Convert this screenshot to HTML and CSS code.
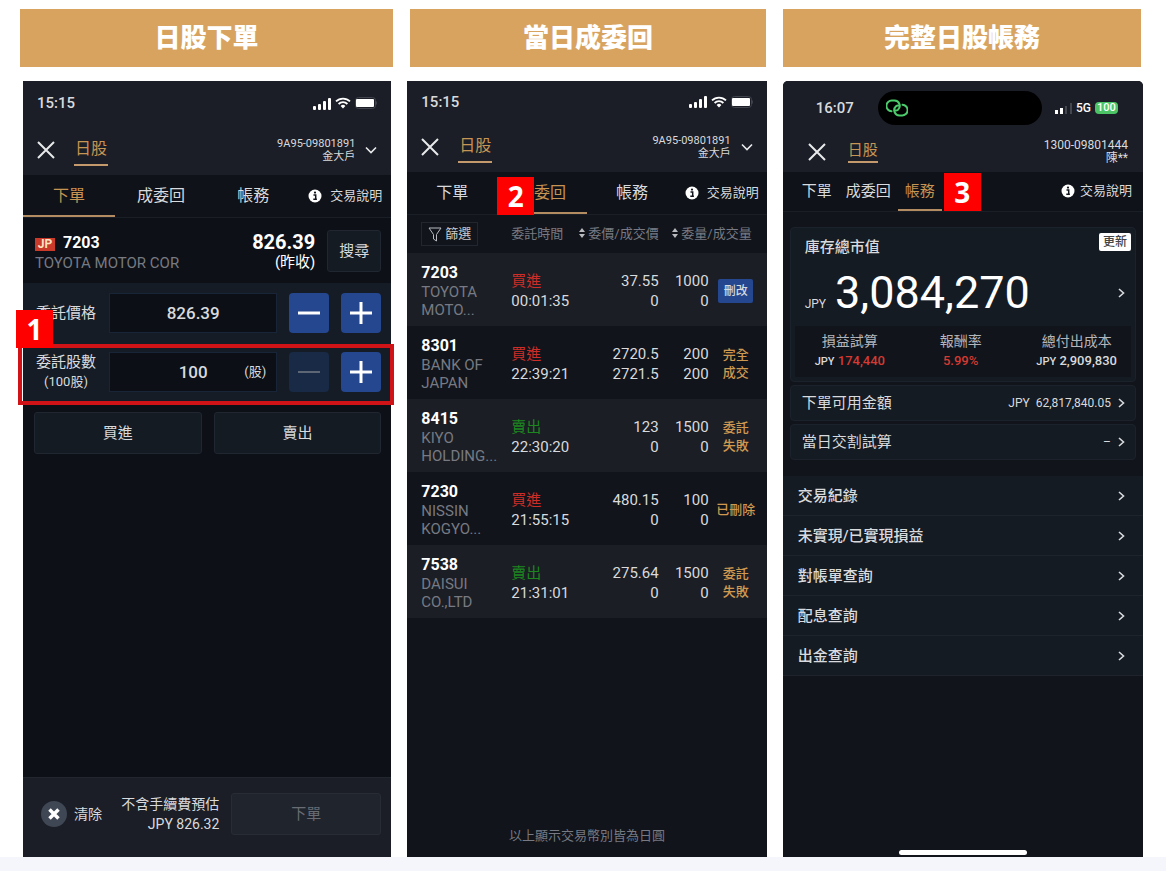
FILE: index.html
```
<!DOCTYPE html>
<html lang="zh-Hant">
<head>
  <meta charset="utf-8">
  <meta name="viewport" content="width=device-width, initial-scale=1">
  <title>日股</title>
  <link rel="stylesheet" href="styles.css">
</head>
<body>

<!-- shared icons -->
<svg class="sprite" aria-hidden="true">
  <symbol id="signal" viewBox="0 0 18 13">
    <rect x="0" y="9" width="3" height="4" rx="1"/><rect x="5" y="7" width="3" height="6" rx="1"/>
    <rect x="10" y="4" width="3" height="9" rx="1"/><rect x="15" y="1" width="3" height="12" rx="1"/>
  </symbol>
  <symbol id="wifi" viewBox="0 0 16 12">
    <path d="M1 4.4a10 10 0 0 1 14 0M3.6 7a6.3 6.3 0 0 1 8.8 0" fill="none" stroke="currentColor" stroke-width="1.8"/>
    <path d="M5.6 9a3.4 3.4 0 0 1 4.8 0L8 11.6z"/>
  </symbol>
  <symbol id="battery" viewBox="0 0 22 12">
    <rect x="0.5" y="0.5" width="20" height="11" rx="3" fill="none" stroke="#41444c"/>
    <rect x="1" y="2" width="18" height="8" rx="1"/><path d="M21 4v4q1-.5 1-2t-1-2" fill="#41444c"/>
  </symbol>
  <symbol id="close" viewBox="0 0 18 18">
    <path d="M1 1l16 16M17 1L1 17" fill="none" stroke="currentColor" stroke-width="2"/>
  </symbol>
  <symbol id="down" viewBox="0 0 12 8">
    <path d="M1 1.5l5 5 5-5" fill="none" stroke="currentColor" stroke-width="1.6"/>
  </symbol>
  <symbol id="right" viewBox="0 0 7 10">
    <path d="M1 1l4.5 4L1 9" fill="none" stroke="currentColor" stroke-width="1.6"/>
  </symbol>
  <symbol id="info" viewBox="0 0 14 14">
    <circle cx="7" cy="7" r="6.5"/>
    <path d="M5.5 6h2.2v4M5.3 10.3h3.6" fill="none" stroke="#12151c" stroke-width="1.5"/><circle cx="7" cy="3.6" r="1.1" fill="#12151c"/>
  </symbol>
  <symbol id="sort" viewBox="0 0 6 10"><path d="M3 0l3 4H0zM3 10l3-4H0z"/></symbol>
</svg>

<header class="titles">
  <h2>日股下單</h2>
  <h2>當日成委回</h2>
  <h2>完整日股帳務</h2>
</header>

<main class="phones">

  <section class="phone phone-order">
    <div class="status-bar">
      <span>15:15</span>
      <div class="status-icons">
        <svg width="18" height="13"><use href="#signal"/></svg>
        <svg width="16" height="12"><use href="#wifi"/></svg>
        <svg width="22" height="12"><use href="#battery"/></svg>
      </div>
    </div>
    <div class="top-bar">
      <button class="icon-button" aria-label="關閉"><svg width="18" height="18"><use href="#close"/></svg></button>
      <a class="market" href="#">日股</a>
      <div class="account">9A95-09801891<br>金大戶</div>
      <button class="icon-button" aria-label="切換帳號"><svg width="12" height="8"><use href="#down"/></svg></button>
    </div>
    <nav class="tabs">
      <a class="tab active" href="#">下單</a>
      <a class="tab" href="#">成委回</a>
      <a class="tab" href="#">帳務</a>
      <a class="tab help" href="#"><svg width="14" height="14"><use href="#info"/></svg>交易說明</a>
    </nav>

    <div class="stock">
      <div class="stock-name">
        <div><span class="flag">JP</span><b>7203</b></div>
        <span class="muted">TOYOTA MOTOR COR</span>
      </div>
      <div class="stock-price">
        <b>826.39</b>
        <span>(昨收)</span>
      </div>
      <button class="dark-button">搜尋</button>
    </div>

    <form class="order-form">
      <div class="form-row">
        <label for="price">委託價格</label>
        <div class="field"><input id="price" value="826.39"></div>
        <button type="button" class="step" aria-label="減價"><svg width="22" height="22"><path d="M0 11h22"/></svg></button>
        <button type="button" class="step" aria-label="加價"><svg width="22" height="22"><path d="M0 11h22M11 0v22"/></svg></button>
      </div>
      <div class="form-row marked">
        <span class="badge badge-one">1</span>
        <label for="qty">委託股數<small>(100股)</small></label>
        <div class="field"><input id="qty" value="100"><span class="unit">(股)</span></div>
        <button type="button" class="step" disabled aria-label="減少股數"><svg width="22" height="22"><path d="M0 11h22"/></svg></button>
        <button type="button" class="step" aria-label="增加股數"><svg width="22" height="22"><path d="M0 11h22M11 0v22"/></svg></button>
      </div>
    </form>
    <div class="sides">
      <button class="dark-button">買進</button>
      <button class="dark-button">賣出</button>
    </div>

    <footer class="order-footer">
      <button class="clear">
        <svg width="26" height="26"><circle cx="13" cy="13" r="13" fill="#3f4754"/><path d="M8.5 8.5l9 9M17.5 8.5l-9 9" stroke="#fff" stroke-width="3.5"/></svg>
        清除
      </button>
      <div class="estimate">不含手續費預估<br>JPY 826.32</div>
      <button class="submit" disabled>下單</button>
    </footer>
  </section>

  <section class="phone phone-orders">
    <div class="status-bar">
      <span>15:15</span>
      <div class="status-icons">
        <svg width="18" height="13"><use href="#signal"/></svg>
        <svg width="16" height="12"><use href="#wifi"/></svg>
        <svg width="22" height="12"><use href="#battery"/></svg>
      </div>
    </div>
    <div class="top-bar">
      <button class="icon-button" aria-label="關閉"><svg width="18" height="18"><use href="#close"/></svg></button>
      <a class="market" href="#">日股</a>
      <div class="account">9A95-09801891<br>金大戶</div>
      <button class="icon-button" aria-label="切換帳號"><svg width="12" height="8"><use href="#down"/></svg></button>
    </div>
    <nav class="tabs">
      <a class="tab" href="#">下單</a>
      <a class="tab active" href="#">成委回<span class="badge badge-two">2</span></a>
      <a class="tab" href="#">帳務</a>
      <a class="tab help" href="#"><svg width="14" height="14"><use href="#info"/></svg>交易說明</a>
    </nav>

    <table class="orders">
      <colgroup>
        <col class="col-name">
        <col class="col-time">
        <col>
        <col class="col-qty">
        <col class="col-state">
      </colgroup>
      <thead>
        <tr>
          <th><button class="filter"><svg width="14" height="15"><path d="M1 1h12L8.5 7.5V14l-3-2V7.5z"/></svg>篩選</button></th>
          <th>委託時間</th>
          <th class="num"><svg width="6" height="10"><use href="#sort"/></svg>委價/成交價</th>
          <th class="num last" colspan="2"><svg width="6" height="10"><use href="#sort"/></svg>委量/成交量</th>
        </tr>
      </thead>
      <tbody>
        <tr>
          <td><b>7203</b><span class="muted">TOYOTA<br>MOTO...</span></td>
          <td><span class="buy">買進</span><br>00:01:35</td>
          <td class="num">37.55<br>0</td>
          <td class="num">1000<br>0</td>
          <td class="state"><button class="edit">刪改</button></td>
        </tr>
        <tr>
          <td><b>8301</b><span class="muted">BANK OF<br>JAPAN</span></td>
          <td><span class="buy">買進</span><br>22:39:21</td>
          <td class="num">2720.5<br>2721.5</td>
          <td class="num">200<br>200</td>
          <td class="state">完全<br>成交</td>
        </tr>
        <tr>
          <td><b>8415</b><span class="muted">KIYO<br>HOLDING...</span></td>
          <td><span class="sell">賣出</span><br>22:30:20</td>
          <td class="num">123<br>0</td>
          <td class="num">1500<br>0</td>
          <td class="state">委託<br>失敗</td>
        </tr>
        <tr>
          <td><b>7230</b><span class="muted">NISSIN<br>KOGYO...</span></td>
          <td><span class="buy">買進</span><br>21:55:15</td>
          <td class="num">480.15<br>0</td>
          <td class="num">100<br>0</td>
          <td class="state">已刪除</td>
        </tr>
        <tr>
          <td><b>7538</b><span class="muted">DAISUI<br>CO.,LTD</span></td>
          <td><span class="sell">賣出</span><br>21:31:01</td>
          <td class="num">275.64<br>0</td>
          <td class="num">1500<br>0</td>
          <td class="state">委託<br>失敗</td>
        </tr>
      </tbody>
    </table>
    <p class="note">以上顯示交易幣別皆為日圓</p>
  </section>

  <section class="phone phone-account">
    <div class="status-bar">
      <span>16:07</span>
      <div class="island">
        <svg width="22" height="18" viewBox="0 0 22 18">
          <g fill="none" stroke="#4bcb6b" stroke-width="2" stroke-linecap="round">
            <path d="M5.5 12.2A5.2 5.2 0 0 1 6 1.500h2.500a5.300 5.300 0 0 1 3.500 9.200q-1.500 1.300-3.200.6"/>
            <path d="M16.500 5.800a5.200 5.200 0 0 1-.5 10.700h-2.500A5.300 5.300 0 0 1 10 7.300q1.500-1.300 3.200-.6"/>
          </g>
        </svg>
      </div>
      <div class="status-icons">
        <svg width="17" height="11" viewBox="0 0 17 11"><rect y="7" width="3" height="4"/><rect x="5" y="5" width="3" height="6"/><path d="M10 3h2v8h-2zM15 0h2v11h-2z" fill="#444750"/></svg>
        <span class="net">5G</span>
        <span class="charge">100</span>
      </div>
    </div>
    <div class="top-bar">
      <button class="icon-button" aria-label="關閉"><svg width="18" height="18"><use href="#close"/></svg></button>
      <a class="market" href="#">日股</a>
      <div class="account">1300-09801444<br>陳**</div>
    </div>
    <nav class="tabs">
      <a class="tab" href="#">下單</a>
      <a class="tab" href="#">成委回</a>
      <a class="tab active" href="#">帳務</a>
      <span class="badge">3</span>
      <a class="tab help" href="#"><svg width="14" height="14"><use href="#info"/></svg>交易說明</a>
    </nav>

    <div class="cards">
      <div class="card">
        <div class="card-head">
          <span>庫存總市值</span>
          <button class="refresh">更新</button>
        </div>
        <a class="total" href="#">
          <small>JPY</small>
          <strong>3,084,270</strong>
          <svg width="7" height="10"><use href="#right"/></svg>
        </a>
        <dl class="summary">
          <div><dt>損益試算</dt><dd><small>JPY</small> <span class="loss">174,440</span></dd></div>
          <div><dt>報酬率</dt><dd class="loss">5.99%</dd></div>
          <div><dt>總付出成本</dt><dd><small>JPY</small> 2,909,830</dd></div>
        </dl>
      </div>
      <a class="card line" href="#">下單可用金額<span>JPY&nbsp; 62,817,840.05</span><svg width="7" height="10"><use href="#right"/></svg></a>
      <a class="card line" href="#">當日交割試算<span>–</span><svg width="7" height="10"><use href="#right"/></svg></a>
    </div>

    <nav class="menu">
      <a href="#">交易紀錄<svg width="7" height="10"><use href="#right"/></svg></a>
      <a href="#">未實現/已實現損益<svg width="7" height="10"><use href="#right"/></svg></a>
      <a href="#">對帳單查詢<svg width="7" height="10"><use href="#right"/></svg></a>
      <a href="#">配息查詢<svg width="7" height="10"><use href="#right"/></svg></a>
      <a href="#">出金查詢<svg width="7" height="10"><use href="#right"/></svg></a>
    </nav>
    <div class="home-bar"></div>
  </section>

</main>

</body>
</html>
```

FILE: styles.css
```
* {
  box-sizing: border-box;
}

body {
  margin: 0;
  min-height: 100vh;
  display: flex;
  flex-direction: column;
  background-color: #fff;
  border-bottom: 14px solid #f5f6fb;
  font-family: Roboto, "Noto Sans CJK TC", sans-serif;
  font-size: 15px;
  line-height: 20px;
  color: #d8dadd;
}

a {
  color: inherit;
  text-decoration: none;
}

button,
input {
  font: inherit;
  color: inherit;
  padding: 0;
  border: none;
  background: none;
}

button {
  cursor: pointer;
}

svg {
  display: block;
  flex: none;
  fill: currentColor;
}

small {
  font-size: 12px;
}

.sprite {
  position: absolute;
  width: 0;
  height: 0;
}

.muted {
  color: #777a82;
}

/* orange titles */
.titles {
  display: grid;
  grid-template-columns: 373fr 356fr 358fr;
  gap: 17px;
  padding: 9px 25px 14px 20px;
}

.titles h2 {
  margin: 0;
  padding: 9px 0;
  background-color: #d8a35e;
  color: #fff;
  text-align: center;
  font-size: 26px;
  font-weight: 900;
  line-height: 40px;
}

.phones {
  flex: 1;
  display: grid;
  grid-template-columns: 368fr 359fr 360fr;
  gap: 16px;
  padding: 0 23px;
}

.phone {
  display: flex;
  flex-direction: column;
  min-width: 0;
  background-color: #11141b;
}

.phone-order {
  background-color: #0d1016;
}

/* status bar and top bar */
.status-bar {
  display: flex;
  align-items: center;
  justify-content: space-between;
  min-height: 44px;
  padding: 0 14px;
  background-color: #1b1e27;
  font-weight: 500;
}

.status-icons {
  display: flex;
  align-items: center;
  gap: 4px;
  color: #fff;
}

.top-bar {
  display: flex;
  align-items: center;
  min-height: 50px;
  padding: 0 14px;
  background-color: #1b1e27;
}

.icon-button {
  color: #e8e9eb;
}

.market {
  margin-left: 19px;
  padding: 5px 1px;
  border-bottom: 2px solid #c49a6c;
  color: #c69453;
  font-size: 16px;
}

.account {
  flex: 1;
  margin-right: 10px;
  text-align: right;
  font-size: 11px;
  line-height: 13px;
}

/* tabs */
.tabs {
  display: grid;
  grid-template-columns: repeat(4, 1fr);
  background-color: #0f1218;
  border-bottom: 1px solid #1a1e26;
}

.tab {
  position: relative;
  display: flex;
  align-items: center;
  justify-content: center;
  min-height: 42px;
  padding-top: 2px;
  border-bottom: 2px solid transparent;
  font-size: 16px;
}

.tab.active {
  border-color: #b38c62;
  color: #c69453;
}

.tab.help {
  gap: 8px;
  font-size: 13px;
}

.help svg {
  color: #fff;
}

.badge {
  width: 37px;
  background-color: #fe0000;
  color: #fff;
  text-align: center;
  font-family: "Open Sans", sans-serif;
  font-size: 28px;
  font-weight: 700;
  line-height: 38px;
}

.badge-one {
  position: absolute;
  left: -6px;
  bottom: 100%;
}

.badge-two {
  position: absolute;
  left: 0;
  top: 5px;
}

/* order entry */
.stock {
  display: flex;
  align-items: center;
  gap: 12px;
  min-height: 65px;
  padding: 0 10px 0 12px;
}

.stock-name {
  flex: 1;
  padding-top: 4px;
}

.stock-name b {
  font-size: 16px;
  color: #fff;
}

.flag {
  display: inline-block;
  width: 20px;
  margin-right: 8px;
  background-color: #c93a2b;
  color: #ffe3c0;
  text-align: center;
  font-size: 12px;
  font-weight: 700;
  line-height: 13px;
}

.stock-price {
  display: flex;
  flex-direction: column;
  padding-top: 3px;
  text-align: right;
  color: #fff;
}

.stock-price b {
  font-size: 20px;
}

.dark-button {
  min-width: 54px;
  padding: 10px 0;
  background-color: #151b23;
  border: 1px solid #202730;
  border-radius: 3px;
}

.order-form {
  display: flex;
  flex-direction: column;
  background-color: #151c25;
}

.form-row {
  display: grid;
  grid-template-columns: 62px 1fr 40px 40px;
  align-items: center;
  column-gap: 12px;
  padding: 10px 10px 11px 12px;
}

.form-row.marked {
  position: relative;
  margin: 0 -3px 0 -5px;
  padding: 4px 9px 9px 13px;
  border: 4px solid #d01317;
}

.form-row label {
  display: flex;
  flex-direction: column;
  align-items: center;
  white-space: nowrap;
}

.form-row label small {
  font-size: 13px;
}

.field {
  display: grid;
  align-items: center;
  min-height: 40px;
  background-color: #0c1016;
  border: 1px solid #182538;
}

.field input {
  grid-area: 1 / 1;
  width: 100%;
  text-align: center;
  font-size: 17px;
  font-weight: 500;
}

.field .unit {
  grid-area: 1 / 1;
  justify-self: end;
  margin-right: 10px;
  font-size: 13px;
}

.step {
  display: flex;
  align-items: center;
  justify-content: center;
  min-height: 40px;
  background-color: #24478f;
  border-radius: 4px;
}

.step svg {
  stroke: #fff;
  stroke-width: 3;
}

.step:disabled {
  background-color: #182a45;
}

.step:disabled svg {
  stroke: #5d6675;
  stroke-width: 2;
}

.sides {
  display: grid;
  grid-template-columns: 1fr 1fr;
  gap: 12px;
  padding: 7px 10px 0 11px;
}

.order-footer {
  display: flex;
  align-items: center;
  gap: 12px;
  min-height: 80px;
  margin-top: auto;
  padding: 0 10px 8px 18px;
  background-color: #1b1e26;
  border-top: 1px solid #22262e;
}

.clear {
  display: flex;
  align-items: center;
  gap: 7px;
  font-size: 14px;
}

.estimate {
  flex: 1;
  text-align: right;
  white-space: nowrap;
  font-size: 14px;
}

.submit {
  width: 150px;
  padding: 10px 0;
  background-color: #20242d;
  border: 1px solid #282c35;
  border-radius: 3px;
  color: #696c73;
}

/* today's orders */
.phone-orders .status-bar {
  min-height: 41px;
}

.orders {
  width: 100%;
  table-layout: fixed;
  border-collapse: collapse;
}

.orders th,
.orders td {
  padding: 0;
  text-align: left;
}

.orders th {
  height: 38px;
  color: #777a82;
  font-size: 13px;
  font-weight: 400;
  white-space: nowrap;
}

.orders th svg {
  display: inline-block;
  margin-right: 3px;
  color: #b9bbc0;
}

.orders th:first-child,
.orders td:first-child {
  padding-left: 14px;
}

.col-name {
  width: 104px;
}

.col-time {
  width: 64px;
}

.col-qty {
  width: 50px;
}

.col-state {
  width: 58px;
}

.orders .filter {
  display: flex;
  align-items: center;
  gap: 3px;
  padding: 1px 6px;
  border: 1px solid #22262e;
  color: #c9cbcf;
}

.orders .filter svg {
  margin: 0;
  fill: none;
  stroke: currentColor;
}

.orders td {
  height: 73px;
  padding-top: 2px;
}

.orders tbody tr:nth-child(odd) {
  background-color: #1b1e25;
}

.orders td b {
  display: block;
  color: #fff;
  font-size: 16px;
}

.orders td .muted {
  display: block;
  line-height: 18px;
}

.orders .num {
  text-align: right;
}

.orders .last {
  padding-right: 15px;
}

.orders .state {
  padding-right: 4px;
  text-align: center;
  color: #cf9850;
  font-size: 13px;
  font-weight: 500;
  line-height: 18px;
  white-space: nowrap;
}

.buy {
  color: #cf2d27;
}

.sell {
  color: #1d861f;
}

.edit {
  width: 35px;
  line-height: 24px;
  background-color: #24478f;
  border-radius: 2px;
  color: #d8dadd;
  font-size: 12px;
}

.note {
  margin: auto 0 11px;
  text-align: center;
  color: #777a82;
  font-size: 13px;
}

/* account */
.phone-account {
  border-radius: 5px 5px 0 0;
  overflow: hidden;
}

.phone-account .status-bar {
  min-height: 54px;
  padding: 0 25px 0 33px;
}

.phone-account .top-bar {
  align-items: flex-start;
  min-height: 37px;
  padding: 4px 15px 0 25px;
}

.phone-account .icon-button {
  padding-top: 4px;
}

.phone-account .market {
  margin-left: 22px;
  padding: 1px 0;
  font-size: 15px;
}

.phone-account .account {
  margin-right: 0;
  font-size: 12px;
}

.island {
  display: flex;
  align-items: center;
  width: 164px;
  min-height: 34px;
  margin-left: 12px;
  padding-left: 8px;
  background-color: #000;
  border-radius: 17px;
}

.net {
  font-size: 12px;
}

.charge {
  width: 23px;
  background-color: #4cc466;
  border-radius: 4px;
  text-align: center;
  font-size: 11px;
  line-height: 12px;
}

.phone-account .tabs {
  display: flex;
  align-items: center;
  padding: 0 11px 0 12px;
}

.phone-account .tab {
  min-height: 39px;
  padding: 0 7px;
  font-size: 15px;
}

.phone-account .tab.help {
  gap: 5px;
  margin-left: auto;
  padding: 0;
  font-size: 13px;
}

.phone-account .badge {
  margin-left: 2px;
}

.cards {
  display: flex;
  flex-direction: column;
  gap: 3px;
  padding: 15px 7px 16px;
}

.card {
  padding: 4px;
  background-color: #151b23;
  border: 1px solid #1c222b;
  border-radius: 4px;
}

.card-head {
  display: flex;
  align-items: center;
  justify-content: space-between;
  min-height: 28px;
  padding-left: 10px;
  font-weight: 500;
}

.card-head span {
  padding-top: 2px;
}

.refresh {
  align-self: flex-start;
  width: 32px;
  margin-top: 1px;
  background-color: #fff;
  border-radius: 2px;
  color: #444;
  font-size: 12px;
  line-height: 18px;
}

.total {
  display: flex;
  align-items: baseline;
  gap: 9px;
  padding: 8px 6px 8px 10px;
}

.total strong {
  flex: 1;
  color: #fff;
  font-size: 45px;
  font-weight: 400;
  line-height: 50px;
}

.total svg {
  align-self: center;
}

.summary {
  display: flex;
  justify-content: space-between;
  margin: 0;
  padding: 5px 14px 5px 20px;
  background-color: #11141b;
  text-align: center;
}

.summary dt {
  font-size: 14px;
  color: #b4b6bb;
}

.summary dd {
  margin: 0;
  font-size: 13px;
  font-weight: 500;
}

.summary small {
  font-size: 11px;
}

.summary .loss {
  color: #d43a31;
}

.line {
  display: flex;
  align-items: center;
  gap: 7px;
  padding: 7px 10px 7px 11px;
}

.line span {
  margin-left: auto;
  font-size: 12px;
}

.menu a {
  display: flex;
  align-items: center;
  justify-content: space-between;
  padding: 10px 18px 9px 15px;
  background-color: #151b23;
  border-bottom: 1px solid #1f242c;
  font-weight: 500;
}

.home-bar {
  width: 128px;
  height: 5px;
  margin: auto auto 2px;
  background-color: #fff;
  border-radius: 3px;
}
```
